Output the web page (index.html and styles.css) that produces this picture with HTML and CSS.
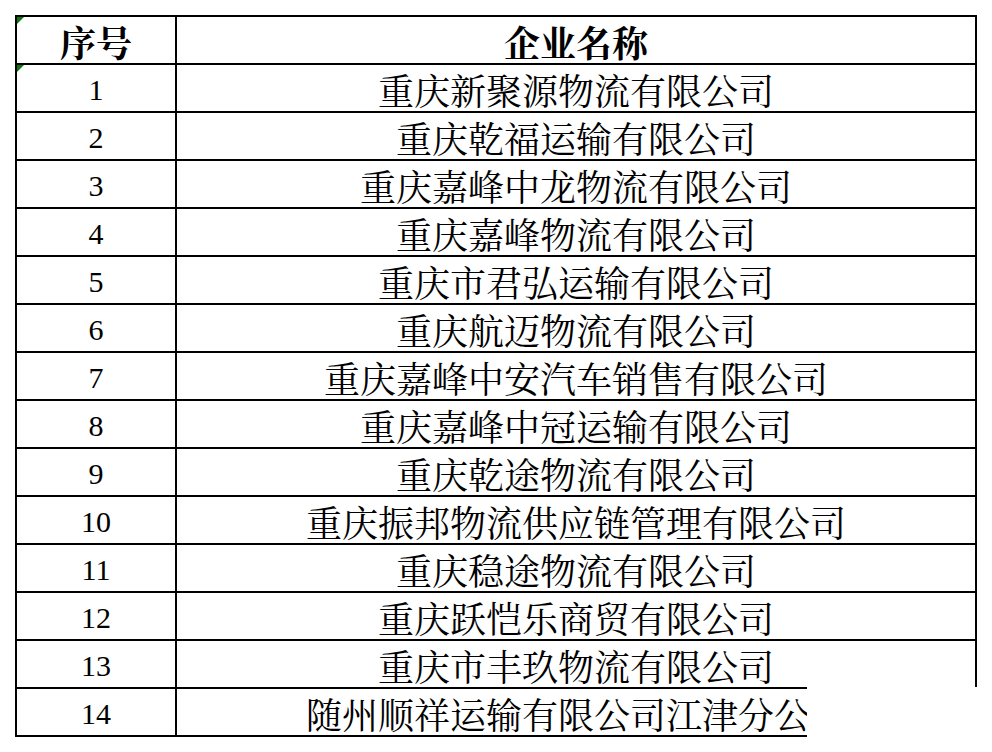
FILE: index.html
```html
<!DOCTYPE html>
<html lang="zh-CN">
<head>
<meta charset="utf-8">
<title>企业名称</title>
<link rel="stylesheet" href="styles.css">
</head>
<body>
<div class="sheet">
  <div class="cell head"><span class="flag"></span>序号</div>
  <div class="cell head">企业名称</div>

  <div class="cell num"><span class="flag"></span>1</div>
  <div class="cell name">重庆新聚源物流有限公司</div>
  <div class="cell num">2</div>
  <div class="cell name">重庆乾福运输有限公司</div>
  <div class="cell num">3</div>
  <div class="cell name">重庆嘉峰中龙物流有限公司</div>
  <div class="cell num">4</div>
  <div class="cell name">重庆嘉峰物流有限公司</div>
  <div class="cell num">5</div>
  <div class="cell name">重庆市君弘运输有限公司</div>
  <div class="cell num">6</div>
  <div class="cell name">重庆航迈物流有限公司</div>
  <div class="cell num">7</div>
  <div class="cell name">重庆嘉峰中安汽车销售有限公司</div>
  <div class="cell num">8</div>
  <div class="cell name">重庆嘉峰中冠运输有限公司</div>
  <div class="cell num">9</div>
  <div class="cell name">重庆乾途物流有限公司</div>
  <div class="cell num">10</div>
  <div class="cell name">重庆振邦物流供应链管理有限公司</div>
  <div class="cell num">11</div>
  <div class="cell name">重庆稳途物流有限公司</div>
  <div class="cell num">12</div>
  <div class="cell name">重庆跃恺乐商贸有限公司</div>
  <div class="cell num">13</div>
  <div class="cell name">重庆市丰玖物流有限公司</div>
  <div class="cell num">14</div>
  <div class="cell name">随州顺祥运输有限公司江津分公司</div>

  <div class="crop"></div>
</div>
</body>
</html>
```

FILE: styles.css
```css
html, body {
  margin: 0;
  padding: 0;
  background: #ffffff;
}

body {
  padding: 15px 0 0 15px;
}

.sheet {
  position: relative;
  display: grid;
  grid-template-columns: 158px 798px;
  grid-auto-rows: 46px;
  gap: 2px;
  padding: 2px;
  width: max-content;
  background: #000000;
}

.cell {
  position: relative;
  background: #ffffff;
  display: flex;
  align-items: center;
  justify-content: center;
  color: #000000;
  white-space: nowrap;
  line-height: 1;
  padding-top: 3px;
  box-sizing: border-box;
}

.head {
  font-family: "Noto Serif CJK SC", "Noto Sans CJK SC", sans-serif;
  font-size: 36px;
  font-weight: 700;
}

.name {
  font-family: "Noto Serif CJK SC", "Noto Sans CJK SC", sans-serif;
  font-size: 36px;
  font-weight: 400;
}

.num {
  font-family: "Liberation Serif", serif;
  font-size: 30px;
}

.flag {
  position: absolute;
  top: 0;
  left: 0;
  width: 0;
  height: 0;
  border-top: 7px solid #0b7a0b;
  border-right: 7px solid transparent;
}

.crop {
  position: absolute;
  left: 792px;
  top: 672px;
  width: 180px;
  height: 70px;
  background: #ffffff;
}
```
